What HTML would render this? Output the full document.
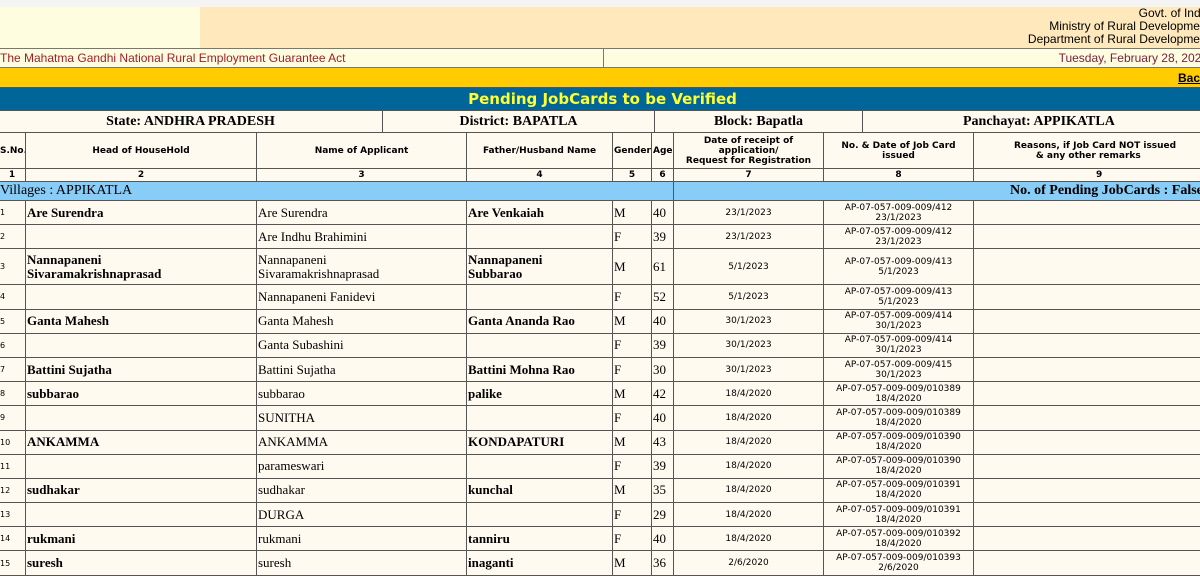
<!DOCTYPE html><html><head><style>
body{margin:0;width:1200px;height:564px;overflow:hidden;background:#fff;font-family:"Liberation Serif",serif;}
.a{position:absolute;box-sizing:border-box;}
table{position:absolute;left:-2px;top:110px;border-collapse:collapse;table-layout:fixed;width:1260px;background:#fffaf0;}
td{border:1px solid #555;padding:0 1px;overflow:hidden;white-space:nowrap;font-size:13px;color:#000;}
.h td{font-family:"DejaVu Sans",sans-serif;font-size:9px;font-weight:bold;text-align:center;line-height:10px;}
.n td{font-family:"DejaVu Sans",sans-serif;font-size:9px;font-weight:bold;text-align:center;}
.d td{height:23.2px;}
.s{font-family:"DejaVu Sans",sans-serif;font-size:8px;}
.dt{font-family:"DejaVu Sans",sans-serif;font-size:9px;text-align:center;line-height:10px;}
.b{font-weight:bold}
.st td{font-weight:bold;font-size:14px;text-align:center;height:21px}
</style></head><body>
<div class="a" style="left:0;top:0;width:1200px;height:7px;background:#f4f4f4"></div>
<div class="a" style="left:0;top:7px;width:200px;height:41px;background:#fffde0"></div>
<div class="a" style="left:200px;top:7px;width:1000px;height:41px;background:#ffe8bc"></div>
<div class="a" style="right:-10px;top:7px;text-align:right;font:12px 'Liberation Sans',sans-serif;line-height:13px;white-space:nowrap">Govt. of India<br>Ministry of Rural Development<br>Department of Rural Development</div>
<div class="a" style="left:0;top:48px;width:1200px;height:20px;background:#fffde0;border-top:1px solid #777;border-bottom:1px solid #777"></div>
<div class="a" style="left:603px;top:48px;width:1px;height:20px;background:#777"></div>
<div class="a" style="left:0;top:51px;font:12px 'Liberation Sans',sans-serif;color:#a0202a">The Mahatma Gandhi National Rural Employment Guarantee Act</div>
<div class="a" style="right:-8px;top:51px;font:12px 'Liberation Sans',sans-serif;color:#7a2040">Tuesday, February 28, 2023</div>
<div class="a" style="left:0;top:68px;width:1200px;height:20px;background:#ffcc00;border-bottom:1px solid #555"></div>
<div class="a" style="left:1178px;top:71px;font:bold 12px 'Liberation Sans',sans-serif;text-decoration:underline;color:#000">Back</div>
<div class="a" style="left:0;top:88px;width:1200px;height:22px;background:#006699;text-align:center;font:bold 15px 'DejaVu Sans',sans-serif;color:#ffff33;line-height:22px;padding-left:5px">Pending JobCards to be Verified</div>
<table style="top:110px">
<colgroup><col style="width:384px"><col style="width:272px"><col style="width:208px"><col style="width:396px"></colgroup>
<tr class="st"><td>State: ANDHRA PRADESH</td><td>District: BAPATLA</td><td>Block: Bapatla</td><td style="text-align:left;padding-left:100px">Panchayat: APPIKATLA</td></tr>
</table>
<table style="top:132px">
<colgroup><col style="width:27px"><col style="width:231px"><col style="width:210px"><col style="width:146px"><col style="width:39px"><col style="width:22px"><col style="width:150px"><col style="width:150px"><col style="width:285px"></colgroup>
<tr class="h" style="height:36px"><td>S.No.</td><td>Head of HouseHold</td><td>Name of Applicant</td><td>Father/Husband Name</td><td>Gender</td><td>Age</td><td>Date of receipt of<br>application/<br>Request for Registration</td><td>No. &amp; Date of Job Card<br>issued</td><td style="text-align:left;padding-left:40px">Reasons, if Job Card NOT issued<br>&nbsp;&nbsp;&nbsp;&nbsp;&nbsp;&nbsp;&nbsp;&amp; any other remarks</td></tr>
<tr class="n" style="height:13px"><td>1</td><td>2</td><td>3</td><td>4</td><td>5</td><td>6</td><td>7</td><td>8</td><td style="text-align:left;padding-left:122px">9</td></tr>
<tr style="height:19px;background:#88ccf8"><td colspan="6" style="font-size:14px">Villages : APPIKATLA</td><td colspan="3" style="font-size:14px;font-weight:bold;padding-left:336px">No. of Pending JobCards : False</td></tr>
<tr class="d"><td class="s">1</td><td class="b">Are Surendra</td><td>Are Surendra</td><td class="b">Are Venkaiah</td><td>M</td><td>40</td><td class="dt">23/1/2023</td><td class="dt">AP-07-057-009-009/412<br>23/1/2023</td><td></td></tr>
<tr class="d"><td class="s">2</td><td></td><td>Are Indhu Brahimini</td><td></td><td>F</td><td>39</td><td class="dt">23/1/2023</td><td class="dt">AP-07-057-009-009/412<br>23/1/2023</td><td></td></tr>
<tr class="d" style="line-height:14px"><td class="s" style="height:35px">3</td><td class="b">Nannapaneni<br>Sivaramakrishnaprasad</td><td>Nannapaneni<br>Sivaramakrishnaprasad</td><td class="b">Nannapaneni<br>Subbarao</td><td>M</td><td>61</td><td class="dt">5/1/2023</td><td class="dt">AP-07-057-009-009/413<br>5/1/2023</td><td></td></tr>
<tr class="d"><td class="s">4</td><td></td><td>Nannapaneni Fanidevi</td><td></td><td>F</td><td>52</td><td class="dt">5/1/2023</td><td class="dt">AP-07-057-009-009/413<br>5/1/2023</td><td></td></tr>
<tr class="d"><td class="s">5</td><td class="b">Ganta Mahesh</td><td>Ganta Mahesh</td><td class="b">Ganta Ananda Rao</td><td>M</td><td>40</td><td class="dt">30/1/2023</td><td class="dt">AP-07-057-009-009/414<br>30/1/2023</td><td></td></tr>
<tr class="d"><td class="s">6</td><td></td><td>Ganta Subashini</td><td></td><td>F</td><td>39</td><td class="dt">30/1/2023</td><td class="dt">AP-07-057-009-009/414<br>30/1/2023</td><td></td></tr>
<tr class="d"><td class="s">7</td><td class="b">Battini Sujatha</td><td>Battini Sujatha</td><td class="b">Battini Mohna Rao</td><td>F</td><td>30</td><td class="dt">30/1/2023</td><td class="dt">AP-07-057-009-009/415<br>30/1/2023</td><td></td></tr>
<tr class="d"><td class="s">8</td><td class="b">subbarao</td><td>subbarao</td><td class="b">palike</td><td>M</td><td>42</td><td class="dt">18/4/2020</td><td class="dt">AP-07-057-009-009/010389<br>18/4/2020</td><td></td></tr>
<tr class="d"><td class="s">9</td><td></td><td>SUNITHA</td><td></td><td>F</td><td>40</td><td class="dt">18/4/2020</td><td class="dt">AP-07-057-009-009/010389<br>18/4/2020</td><td></td></tr>
<tr class="d"><td class="s">10</td><td class="b">ANKAMMA</td><td>ANKAMMA</td><td class="b">KONDAPATURI</td><td>M</td><td>43</td><td class="dt">18/4/2020</td><td class="dt">AP-07-057-009-009/010390<br>18/4/2020</td><td></td></tr>
<tr class="d"><td class="s">11</td><td></td><td>parameswari</td><td></td><td>F</td><td>39</td><td class="dt">18/4/2020</td><td class="dt">AP-07-057-009-009/010390<br>18/4/2020</td><td></td></tr>
<tr class="d"><td class="s">12</td><td class="b">sudhakar</td><td>sudhakar</td><td class="b">kunchal</td><td>M</td><td>35</td><td class="dt">18/4/2020</td><td class="dt">AP-07-057-009-009/010391<br>18/4/2020</td><td></td></tr>
<tr class="d"><td class="s">13</td><td></td><td>DURGA</td><td></td><td>F</td><td>29</td><td class="dt">18/4/2020</td><td class="dt">AP-07-057-009-009/010391<br>18/4/2020</td><td></td></tr>
<tr class="d"><td class="s">14</td><td class="b">rukmani</td><td>rukmani</td><td class="b">tanniru</td><td>F</td><td>40</td><td class="dt">18/4/2020</td><td class="dt">AP-07-057-009-009/010392<br>18/4/2020</td><td></td></tr>
<tr class="d"><td class="s">15</td><td class="b">suresh</td><td>suresh</td><td class="b">inaganti</td><td>M</td><td>36</td><td class="dt">2/6/2020</td><td class="dt">AP-07-057-009-009/010393<br>2/6/2020</td><td></td></tr>
</table>
</body></html>
